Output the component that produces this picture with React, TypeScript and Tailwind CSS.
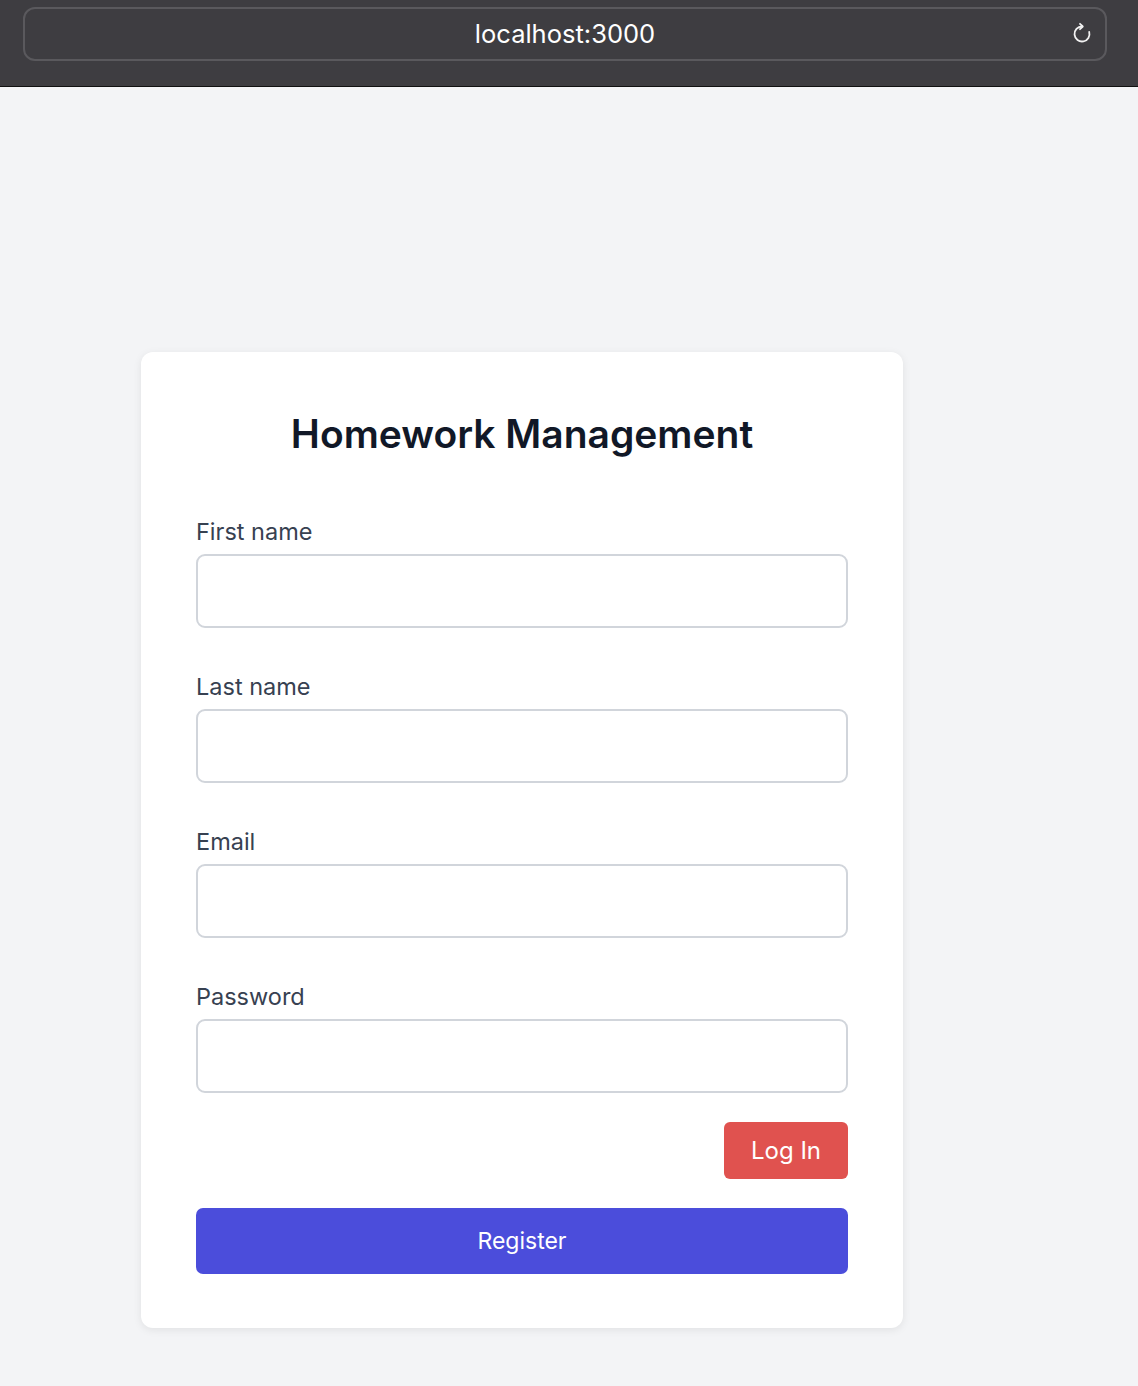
type FieldProps = {
  label: string
  type?: string
}

function Field({ label, type = "text" }: FieldProps) {
  return (
    <div className="flex flex-col">
      <label className="text-[23.5px] leading-[33px] text-[#374151]">{label}</label>
      <input
        type={type}
        className="mt-[6px] h-[74px] w-full rounded-[9px] border-2 border-[#d1d5db] bg-white px-4 text-[22px] outline-none"
      />
    </div>
  )
}

function ReloadIcon() {
  return (
    <svg width="24" height="24" viewBox="0 0 24 24" fill="none" stroke="#f2f2f2" strokeWidth="1.8" strokeLinecap="round" strokeLinejoin="round">
      <path d="M12 4.5a7.5 7.5 0 1 0 7.2 5.4" />
      <path d="M10 1.8 12.8 4.5 10 7.2" />
    </svg>
  )
}

export default function App() {
  return (
    <div className="min-h-[1386px] bg-[#f3f4f6] font-['Inter',sans-serif]">
      <div className="h-[87px] border-b border-[#111] bg-[#3e3d41] pl-[23px] pr-[31px] pt-[7px]">
        <div className="relative flex h-[54px] items-center justify-center rounded-[12px] border-2 border-[#5a595d]">
          <span className="text-[25.5px] text-white">localhost:3000</span>
          <div className="absolute right-[11px] top-[13px]">
            <ReloadIcon />
          </div>
        </div>
      </div>

      <div className="pl-[141px] pt-[265px]">
        <div className="w-[762px] rounded-[12px] bg-white px-[55px] pb-[54px] pt-[58px] shadow-[0_2px_8px_rgba(0,0,0,0.08)]">
          <h1 className="text-center text-[39px] font-semibold leading-[47px] text-[#111827]">Homework Management</h1>
          <div className="mt-[58px] flex flex-col gap-[42px]">
            <Field label="First name" />
            <Field label="Last name" />
            <Field label="Email" type="email" />
            <Field label="Password" type="password" />
          </div>
          <div className="mt-[29px] flex justify-end">
            <button className="h-[57px] w-[124px] rounded-[6px] bg-[#e0524f] text-[24px] text-white">Log In</button>
          </div>
          <button className="mt-[29px] h-[66px] w-full rounded-[7px] bg-[#4b4ddb] text-[23px] text-white">Register</button>
        </div>
      </div>
    </div>
  )
}
